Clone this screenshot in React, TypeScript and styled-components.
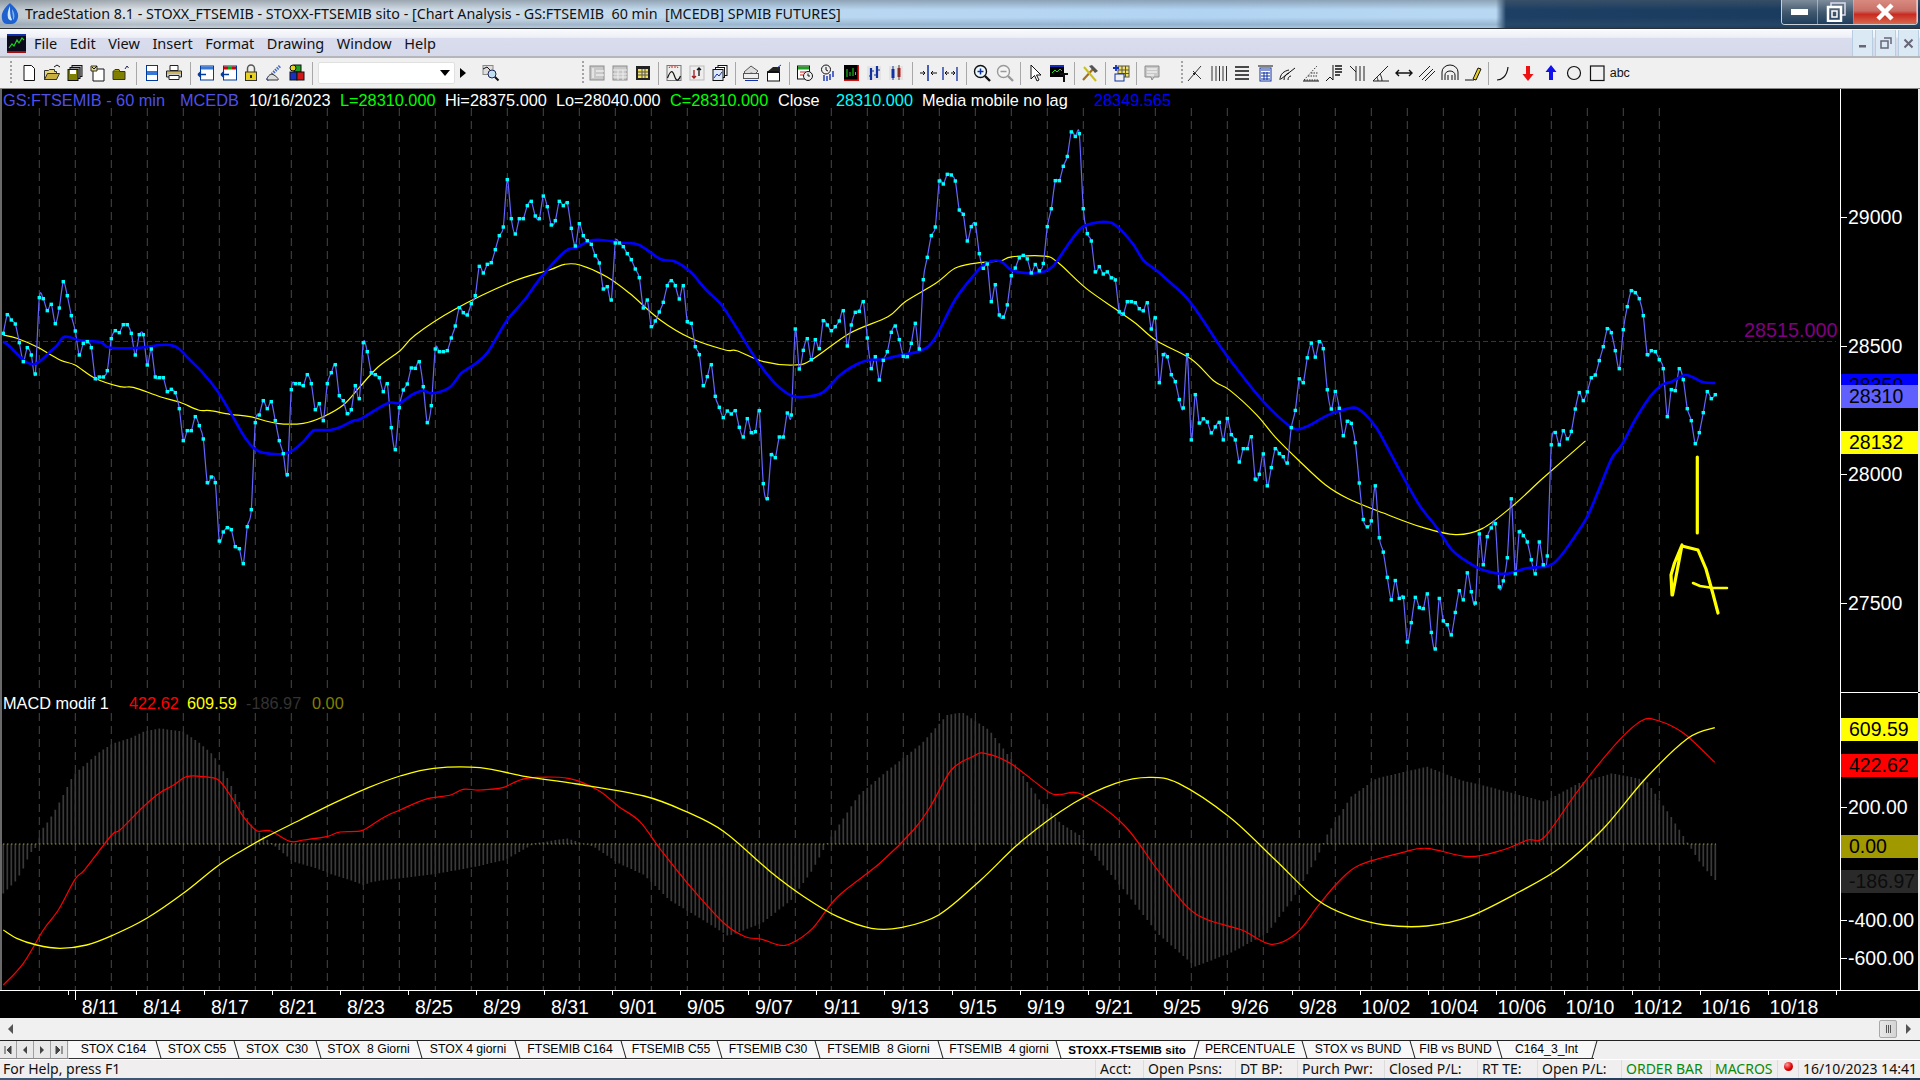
import React from "react";
import styled, { createGlobalStyle } from "styled-components";

const GlobalStyle = createGlobalStyle`
  html, body { margin: 0; padding: 0; background: #000; overflow: hidden; }
  #root { width: 1920px; height: 1080px; }
  * { box-sizing: border-box; }
`;

const UI = `"Noto Sans", "Open Sans", sans-serif`;
const CHART = `"Liberation Sans", Arial, sans-serif`;

type Pt = [number, number];
const zoomed = (list: number[][], ox: number, oy: number, sx: number, sy: number): Pt[] =>
  list.map(([x, y]) => [ox + x / sx, oy + y / sy]);
const lattice = (ys: number[], x0: number, oy: number, sy: number): Pt[] =>
  ys.map((y, i) => [x0 + i * 4, oy + y / sy]);

const smooth = (p: Pt[], k = 6) => {
  let d = `M${p[0][0].toFixed(1)} ${p[0][1].toFixed(1)}`;
  for (let i = 0; i < p.length - 1; i++) {
    const a = p[Math.max(i - 1, 0)];
    const b = p[i];
    const c = p[i + 1];
    const e = p[Math.min(i + 2, p.length - 1)];
    const c1x = b[0] + (c[0] - a[0]) / k;
    const c1y = b[1] + (c[1] - a[1]) / k;
    const c2x = c[0] - (e[0] - b[0]) / k;
    const c2y = c[1] - (e[1] - b[1]) / k;
    d += `C${c1x.toFixed(1)} ${c1y.toFixed(1)} ${c2x.toFixed(1)} ${c2y.toFixed(1)} ${c[0].toFixed(1)} ${c[1].toFixed(1)}`;
  }
  return d;
};

const closes: Pt[] = [
  ...lattice([160,104,120,132,188,245,203,225,282,53,56,92,73,131,84,5,47,107,153,225,190,185,203,296,291,291,272,176,152,158,134,134,160,225,164,164,255,207,291,293,293,335,328,338,386,482,452,452,410,437,477,608,591,608,783,756,743,749,800,806,851,740,689,428,405,362,386,365,422,482,521,584,329,311,311,317,284,311,389,371,422,311,278,254,347,362,401,389,317,356,188,215,278,284,293,335,311,443,509,383], 3.3, 280, 3),
  ...lattice([810,792,744,745,725,800,908,857,687,695,695,692,654,618,563,578,585,551,527,439,459,433,428,389,347,321,179,296,342,296,296,257,244,288,296,228,260,315,302,244,257,248,325,378,311,347,362,373,407,429,507,500,540,369,369,380,401,419,447,473,564,540,620,603,576,547,497,482,497,537,497,605,610,680,704,797,770,734,829,862,893,873,882,872,922,951,896,938,935,872,1091,1136,1004,1013,951,951,879,885,627,747,691,656,719,659,686,602,615,632,620,603,572,678,615,577,574,545,654,746,710,780,721,695,637,618,659,709,710,670,610,687,479,412,347,321,183,192,163,165,183,270,283,363,320,312,401,445,432,545,494,585], 403.3, 120, 3),
  ...lattice([562,527,444,422,393,386,396,436,412,430,409,304,253,173,173,132,104,34,47,39,253,324,345,433,418,439,433,450,456,547,553,518,518,521,538,544,521,596,564,749,669,675,726,746,797,821,669,912,783,864,852,861,892,875,862,912,851,897,912,975,937,937,903,1024,1010,952,1043,991,937,951,960,978,877,828,738,749,678,636,676,632,652,769,824,774,822,900,859,865,920,1035,1139,1160,1143,1043,1191,1232,1304,1368,1313,1364,1361,1488,1433,1361,1390,1393,1351,1461,1508,1364,1428,1439,1468,1404,1342,1368,1291,1345,1377,1180,1268,1188,1163,1151,1331,1314,1248,1080,1294,1174,1185,1203,1254,1294,1203,1268,1243,926,891,926,886,909,888,824,777,800,775,735,727,686], 1003.3, 120, 2.851),
  ...lattice([200,146,158,212,266,149,80,32,38,56,107,224,212,215,239,266,410,329,332,266,299,386,422,491,458,398,335,356,344], 1603.3, 280, 3),
];

const blueMA: Pt[] = [
  ...zoomed([[10,185],[30,200],[60,230],[80,247],[105,252],[130,235],[150,215],[170,198],[190,172],[210,172],[240,181],[300,186],[320,200],[340,204],[400,204],[440,201],[480,195],[510,195],[535,205],[570,240],[605,275],[650,330],[690,395],[730,465],[760,503],[790,518],[850,522],[880,510],[910,485],[935,455],[950,450],[990,450],[1020,442],[1060,422],[1080,418],[1110,400],[1165,369],[1200,369]], 0, 280, 3, 3),
  ...zoomed([[30,825],[60,812],[85,820],[130,802],[160,760],[195,733],[230,695],[280,600],[325,540],[370,470],[430,395],[460,383],[495,363],[525,360],[580,368],[625,375],[680,417],[720,425],[760,457],[800,510],[840,555],[880,625],[935,725],[980,790],[1025,828],[1060,830],[1105,817],[1150,765],[1195,732],[1225,720],[1260,718],[1310,705],[1360,692],[1395,660],[1450,540],[1500,465],[1530,430],[1568,423]], 400, 120, 2.613, 3),
  ...zoomed([[30,428],[75,437],[115,432],[140,415],[175,360],[210,310],[240,295],[280,291],[305,303],[345,350],[375,400],[410,430],[450,468],[490,510],[530,570],[575,645],[630,725],[690,805],[760,875],[795,877],[850,845],[885,830],[925,820],[950,835],[985,880],[1025,960],[1065,1040],[1100,1105],[1140,1160],[1180,1225],[1215,1255],[1260,1282],[1320,1294],[1375,1278],[1430,1272],[1460,1250],[1500,1190],[1535,1130],[1568,1045]], 1000, 120, 2.613, 2.851),
  ...zoomed([[35,535],[65,495],[105,420],[150,350],[185,315],[215,305],[255,285],[285,295],[310,307],[345,309]], 1600, 280, 3, 3),
];

const yellowMA: Pt[] = [
  ...zoomed([[10,165],[50,175],[110,200],[180,240],[225,255],[285,295],[360,320],[400,322],[480,350],[540,367],[595,390],[630,392],[690,403],[750,410],[830,430],[910,430],[970,410],[1030,375],[1080,320],[1135,260],[1200,212]], 0, 280, 3, 3),
  ...zoomed([[40,645],[140,570],[290,487],[390,450],[430,433],[470,435],[540,470],[600,520],[680,600],[760,655],[850,690],[880,692],[950,725],[1030,735],[1075,720],[1175,640],[1275,590],[1320,545],[1400,490],[1450,445],[1500,430],[1568,423]], 400, 120, 2.613, 3),
  ...zoomed([[30,390],[115,388],[150,405],[225,480],[310,545],[355,580],[410,630],[500,682],[560,745],[600,770],[670,840],[720,905],[780,970],[850,1040],[910,1080],[1000,1120],[1100,1160],[1190,1182],[1260,1165],[1340,1100],[1420,1020],[1530,915]], 1000, 120, 2.613, 2.851),
];

const macdYellow: Pt[] = [
  ...zoomed([[10,750],[50,775],[110,795],[180,805],[260,795],[340,765],[440,715],[550,640],[650,560],[720,515],[800,470],[900,420],[1000,370],[1100,325]], 0, 680, 3, 3),
  ...zoomed([[0,228],[40,205],[95,203],[150,230],[210,252],[290,288],[340,335],[385,395],[440,515],[480,590],[520,650],[560,685],[595,683],[640,645],[690,540],[740,420],[800,310],[850,250],[890,232],[925,250],[985,350],[1040,480],[1090,600],[1130,650],[1170,675],[1220,678],[1270,650],[1330,575],[1380,500],[1430,385],[1480,235],[1530,115],[1562,83]], 400, 700, 1.188, 3),
];

const macdRed: Pt[] = [
  ...zoomed([[10,915],[70,850],[130,750],[175,690],[225,598],[255,568],[335,465],[360,450],[430,380],[480,338],[520,316],[560,290],[610,290],[655,300],[690,345],[730,410],[770,452],[810,452],[870,484],[910,480],[980,470],[1020,456],[1085,452],[1130,425],[1165,405]], 0, 680, 3, 3),
  ...zoomed([[0,330],[30,298],[60,285],[75,268],[95,270],[122,263],[150,235],[200,235],[235,270],[260,320],[285,365],[310,450],[345,560],[385,670],[410,710],[430,718],[450,735],[465,730],[490,685],[520,590],[570,490],[610,390],[630,320],[655,210],[680,170],[695,160],[725,190],[770,275],[785,283],[810,283],[860,375],[900,510],[935,620],[960,660],[1000,690],[1035,733],[1065,700],[1090,620],[1115,545],[1140,495],[1190,458],[1220,445],[1270,470],[1310,450],[1340,420],[1360,410],[1400,270],[1445,130],[1475,62],[1495,62],[1525,100],[1562,187]], 400, 700, 1.188, 3),
];

const histEnvelope: Pt[] = [
  ...zoomed([[10,640],[30,620],[50,600],[70,565],[90,520],[110,500],[125,450],[140,430],[160,400],[190,345],[220,285],[260,250],[300,215],[340,190],[390,175],[430,155],[480,145],[550,155],[600,190],[640,225],[680,290],[720,370],[750,430],[790,470],[815,490],[850,520],[880,545],[950,565],[1000,585],[1050,600],[1090,615],[1120,605],[1170,598]], 0, 680, 3, 3),
  ...zoomed([[0,535],[40,523],[90,500],[125,480],[160,430],[198,415],[230,440],[260,490],[290,525],[320,600],[360,660],[390,708],[430,670],[465,600],[490,510],[505,440],[515,400],[545,285],[580,210],[620,130],[650,45],[668,37],[700,90],[730,190],[760,300],[785,370],[810,410],[825,465],[860,570],[900,700],[945,800],[990,755],[1030,700],[1060,600],[1090,470],[1100,410],[1130,290],[1160,235],[1220,200],[1260,240],[1300,265],[1360,305],[1400,250],[1440,220],[1480,240],[1510,350],[1530,430],[1545,490],[1562,540]], 400, 700, 1.188, 3),
];

const interpolate = (pts: Pt[], x: number) => {
  for (let i = 1; i < pts.length; i++) {
    if (x <= pts[i][0]) {
      const [x0, y0] = pts[i - 1];
      const [x1, y1] = pts[i];
      return y0 + ((y1 - y0) * (x - x0)) / Math.max(x1 - x0, 0.01);
    }
  }
  return pts[pts.length - 1][1];
};

const ZERO = 844;
const histPath = Array.from({ length: 429 }, (_, i) => {
  const x = 3.3 + i * 4;
  return `M${x.toFixed(1)} ${ZERO}V${interpolate(histEnvelope, x).toFixed(1)}`;
}).join("");

const gridPath = (y0: number, y1: number) =>
  Array.from({ length: 46 }, (_, k) => `M${(39.3 + k * 36).toFixed(1)} ${y0}V${y1}`).join("");

const Screen = styled.div`
  width: 1920px;
  height: 1080px;
  display: flex;
  flex-direction: column;
  overflow: hidden;
  background: #f0f0f0;
`;

const TitleBar = styled.div`
  height: 29px;
  flex: none;
  display: flex;
  align-items: flex-start;
  border-bottom: 1px solid #2c3138;
  background:
    linear-gradient(180deg, rgba(255,255,255,0) 62%, rgba(70,95,120,0.28) 88%, rgba(60,80,100,0.12) 100%),
    linear-gradient(180deg, rgba(90,100,110,0.45) 0, rgba(255,255,255,0) 35%),
    linear-gradient(90deg, #bcc6ce 0, #dbe1e6 130px, #cfdbe6 430px, #bcd8f0 720px, #b2d4f3 1200px, #b8d8f2 1496px, #1d3f63 1506px, #183a5c 1920px);
`;

const AppIcon = styled.svg`
  width: 20px;
  height: 26px;
  margin: 1px 5px 0 0;
  flex: none;
`;

const TitleText = styled.div`
  font: 14.3px/28px ${UI};
  color: #111;
  white-space: pre;
`;

const WinButtons = styled.div`
  margin-left: auto;
  margin-right: 2px;
  display: flex;
  height: 25px;
  border: 1px solid #c8d0d8;
  border-top: none;
  border-radius: 0 0 4px 4px;
  overflow: hidden;
`;

const WinBtn = styled.div<{ $w: number; $close?: boolean }>`
  width: ${(p) => p.$w}px;
  display: flex;
  align-items: center;
  justify-content: center;
  border-right: 1px solid rgba(255, 255, 255, 0.4);
  background: ${(p) =>
    p.$close
      ? "linear-gradient(180deg,#d98a80 0,#c87068 45%,#c92a20 60%,#d86a50 100%)"
      : "linear-gradient(180deg,#7d8c9b 0,#42596f 50%,#1f3e5e 100%)"};
`;

const MenuBar = styled.div`
  height: 29px;
  flex: none;
  display: flex;
  align-items: center;
  padding-left: 7px;
  border-top: 1px solid #fff;
  border-bottom: 2px solid #b4b6bc;
  background: linear-gradient(180deg, #f8f9fc 0, #eef0f7 28%, #d9ddee 32%, #d5d9ea 100%);
`;

const MenuLogo = styled.svg`
  width: 19px;
  height: 19px;
  margin-right: 8px;
  flex: none;
`;

const MenuItems = styled.div`
  display: flex;
  gap: 12.5px;
  font: 14.5px/20px ${UI};
  color: #111;
`;

const MdiButtons = styled.div`
  margin-left: auto;
  margin-right: 1px;
  display: flex;
  gap: 2px;
  align-self: stretch;
`;

const MdiBtn = styled.div`
  width: 21px;
  display: flex;
  align-items: center;
  justify-content: center;
  background: #dbe9f5;
  border: 1px solid #b8cde0;
  border-width: 0 1px;
`;

const ToolBar = styled.div`
  height: 31px;
  flex: none;
  display: flex;
  align-items: center;
  background: #f0f0f0;
  border-bottom: 1px solid #888;
`;

const Slot = styled.div<{ $w?: number }>`
  width: ${(p) => p.$w ?? 22.85}px;
  height: 22px;
  flex: none;
  display: flex;
  align-items: center;
  justify-content: center;
`;

const Ico = styled.svg.attrs({ viewBox: "0 0 20 20" })`
  width: 20px;
  height: 20px;
  display: block;
`;

const Sep = styled.div`
  width: 1px;
  height: 23px;
  margin: 0 3.7px;
  background: #a8a8a8;
  flex: none;
`;

const Grip = styled.div<{ $ml: number }>`
  width: 2px;
  height: 24px;
  margin-left: ${(p) => p.$ml}px;
  margin-right: 1.6px;
  flex: none;
  background: repeating-linear-gradient(180deg, #a4a4a4 0 2px, transparent 2px 4px);
`;

const Combo = styled.div`
  width: 137px;
  height: 22px;
  margin-left: 1.5px;
  background: #fff;
  border: 1px solid #e0e0e0;
  border-radius: 2px;
  display: flex;
  align-items: center;
  justify-content: flex-end;
  padding-right: 4px;
  flex: none;
`;

const Caret = styled.div`
  width: 0;
  height: 0;
  border-left: 5px solid transparent;
  border-right: 5px solid transparent;
  border-top: 6px solid #000;
`;

const CaretRight = styled.div`
  width: 0;
  height: 0;
  border-top: 5px solid transparent;
  border-bottom: 5px solid transparent;
  border-left: 6px solid #000;
`;

const AbcText = styled.span`
  font: 12.5px/20px ${CHART};
  color: #111;
`;

const ChartArea = styled.div`
  height: 929px;
  flex: none;
  background: #000;
  display: flex;
  flex-direction: column;
  font-family: ${CHART};
`;

const Pane = styled.div<{ $h: number }>`
  height: ${(p) => p.$h}px;
  flex: none;
  display: flex;
`;

const Plot = styled.div`
  position: relative;
  width: 1840px;
  flex: none;
  box-shadow: inset 2px 0 0 #6a6a6a;
`;

const PlotSvg = styled.svg`
  display: block;
  width: 100%;
  height: 100%;
`;

const Legend = styled.div<{ $top: number }>`
  position: absolute;
  left: 3px;
  top: ${(p) => p.$top}px;
  display: flex;
  font-size: 16.3px;
  line-height: 20px;
  white-space: pre;
`;

const LegendItem = styled.span<{ $w?: number; $c: string }>`
  width: ${(p) => (p.$w ? `${p.$w}px` : "auto")};
  color: ${(p) => p.$c};
  flex: none;
`;

const PriceFloat = styled.span`
  position: absolute;
  left: 1744px;
  top: 230px;
  color: #800080;
  font-size: 19.8px;
  line-height: 22px;
`;

const Axis = styled.div<{ $line?: boolean }>`
  position: relative;
  flex: 1;
  border-left: 1px solid #fff;
  margin-right: 2px;
  border-bottom: ${(p) => (p.$line ? "1px solid #fff" : "none")};
`;

const RightGutter = styled.div`
  position: absolute;
  right: -2px;
  top: 0;
  bottom: 0;
  width: 2px;
  background: #e8e8e8;
`;

const AxisValue = styled.div<{ $y: number }>`
  position: absolute;
  left: 7px;
  top: ${(p) => p.$y}px;
  transform: translateY(-50%);
  color: #fff;
  font-size: 19.5px;
  line-height: 22px;
  &::before {
    content: "";
    position: absolute;
    left: -7px;
    top: 11px;
    width: 6px;
    height: 1px;
    background: #fff;
  }
`;

const AxisTag = styled.div<{ $y: number; $bg: string; $c?: string; $h?: number }>`
  position: absolute;
  left: 0;
  right: 0;
  top: ${(p) => p.$y}px;
  height: ${(p) => p.$h ?? 23}px;
  background: ${(p) => p.$bg};
  color: ${(p) => p.$c ?? "#000"};
  font-size: 19.5px;
  line-height: 23px;
  padding-left: 8px;
  overflow: hidden;
`;

const DateAxis = styled.div`
  height: 28px;
  flex: none;
  display: flex;
  padding-left: 72px;
  border-top: 1px solid #fff;
`;

const DateCell = styled.div<{ $w?: number; $first?: boolean }>`
  position: relative;
  width: ${(p) => p.$w ?? 68}px;
  flex: none;
  text-align: center;
  color: #fff;
  font-size: 19.5px;
  line-height: 32px;
  &::before {
    content: "";
    position: absolute;
    top: 0;
    left: ${(p) => (p.$first ? -4 : 8)}px;
    width: 1px;
    height: 4px;
    background: #fff;
  }
  &::after {
    content: "";
    display: ${(p) => (p.$first ? "block" : "none")};
    position: absolute;
    top: 0;
    left: 3px;
    width: 1px;
    height: 9px;
    background: #fff;
  }
`;

const ScrollBar = styled.div`
  height: 22px;
  flex: none;
  display: flex;
  align-items: center;
  background: #f0f0f0;
  padding: 0 9px 0 8px;
`;

const ScrollLeft = styled.div`
  width: 0;
  height: 0;
  border-top: 5px solid transparent;
  border-bottom: 5px solid transparent;
  border-right: 5px solid #555;
`;

const ScrollThumb = styled.div`
  margin-left: auto;
  width: 18px;
  height: 18px;
  background: linear-gradient(90deg, #e8e8e8, #d4d4d4);
  border: 1px solid #a8a8a8;
  border-radius: 2px;
  display: flex;
  align-items: center;
  justify-content: center;
  gap: 1px;
`;

const ThumbBar = styled.span`
  width: 1px;
  height: 8px;
  background: #555;
`;

const ScrollRight = styled.div`
  margin-left: 9px;
  width: 0;
  height: 0;
  border-top: 5px solid transparent;
  border-bottom: 5px solid transparent;
  border-left: 5px solid #555;
`;

const TabRow = styled.div`
  height: 19px;
  flex: none;
  display: flex;
  border-top: 1px solid #222;
  background: #f0f0f0;
`;

const NavGroup = styled.div`
  width: 69px;
  flex: none;
  display: flex;
  border-bottom: 1px solid #888;
`;

const NavBtn = styled.div`
  width: 17px;
  display: flex;
  align-items: center;
  justify-content: center;
  background: #e8e8e8;
  border-right: 1px solid #a0a0a0;
  color: #444;
`;

const Tab = styled.div<{ $w: number; $active?: boolean; $flip?: boolean }>`
  position: relative;
  width: ${(p) => p.$w}px;
  flex: none;
  text-align: center;
  font-size: ${(p) => (p.$active ? 11.6 : 12.2)}px;
  line-height: 17px;
  font-family: ${CHART};
  font-weight: ${(p) => (p.$active ? 700 : 400)};
  color: #000;
  white-space: pre;
  background: ${(p) => (p.$active ? "#fff" : "#f8f8f8")};
  border-bottom: 1px solid #333;
  &::after {
    content: "";
    position: absolute;
    z-index: 1;
    right: -1px;
    top: -1px;
    width: 1px;
    height: 19px;
    background: #222;
    transform: rotate(${(p) => (p.$flip ? 16 : -16)}deg);
  }
`;

const StatusBar = styled.div`
  height: 19px;
  flex: none;
  display: flex;
  align-items: center;
  background: #f0eeee;
  border-top: 1px solid #fff;
  font: 14px/18px ${UI};
  color: #111;
`;

const StatusHelp = styled.div`
  flex: 1;
  padding-left: 3px;
`;

const StatusField = styled.div<{ $w: number; $c?: string }>`
  width: ${(p) => p.$w}px;
  flex: none;
  height: 100%;
  padding-left: 4px;
  border-left: 1px solid #dcdcdc;
  color: ${(p) => p.$c ?? "#111"};
  white-space: pre;
  display: flex;
  align-items: center;
`;

const RedDot = styled.span`
  width: 9px;
  height: 9px;
  margin: -6px 0 0 2px;
  border-radius: 50%;
  background: radial-gradient(circle at 35% 30%, #ff9a9a, #e00000 55%, #800 100%);
`;

const BottomStrip = styled.div`
  flex: 1;
  background: linear-gradient(90deg, #3c5a78, #1e3a5a);
`;

const S = { fill: "none", stroke: "#111", strokeWidth: 1 } as const;
const G = { fill: "#c8c8c8", stroke: "#8c8c8c", strokeWidth: 1 } as const;

const icons: Record<string, React.ReactNode> = {
  doc: <path d="M5 2.500h7.500l3 3v12H5z" fill="#fff" stroke="#111" />,
  open: <><path d="M2.500 16.500v-9h4l1-1h5v2h2v8z" fill="#e8d878" stroke="#333" /><path d="M2.500 16.500l3-6h12l-3 6z" fill="#c8b040" stroke="#333" /><path d="M12 4l3-2 3 2" fill="none" stroke="#111" /></>,
  saves: <><rect x="7" y="2.500" width="10" height="11" fill="#bbb" stroke="#111" /><rect x="5" y="4.500" width="10" height="11" fill="#999" stroke="#111" /><rect x="3" y="6.500" width="10" height="11" fill="#808000" stroke="#111" /><rect x="5" y="7" width="6" height="4" fill="#fff" /></>,
  sheet: <><path d="M5 6h11v12H5z" fill="#fff" stroke="#111" /><path d="M3 3h6v5H3z" fill="#e8d878" stroke="#333" /><path d="M4 4l2 2 3-3" {...S} /></>,
  box: <><path d="M3 8.500h12v8H3z" fill="#808000" stroke="#333" /><path d="M3 8.500l2-2h4l1 2" fill="#a0a000" stroke="#333" /><path d="M15 6l2-3 1.500 2" fill="none" stroke="#225" /></>,
  page: <><rect x="4.500" y="2.500" width="11" height="15" fill="#fff" stroke="#003a9a" /><rect x="5" y="8" width="10" height="4" fill="#3a78d8" /></>,
  printer: <><path d="M6 2.500h8v5H6z" fill="#fff" stroke="#222" /><path d="M2.500 8h15v6h-15z" fill="#ccc" stroke="#222" /><path d="M5 12.500h10v4H5z" fill="#fff" stroke="#222" /><path d="M3 10h14" stroke="#c8a000" /></>,
  win1: <><rect x="4.500" y="3" width="13" height="14" fill="#fff" stroke="#003a9a" /><rect x="5" y="3.500" width="12" height="3" fill="#3a78d8" /><path d="M2 11.500h8M2 11.500l3-3M2 11.500l3 3" fill="none" stroke="#003a9a" strokeWidth="1.400" /></>,
  win2: <><rect x="4.500" y="3" width="13" height="14" fill="#fff" stroke="#003a9a" /><rect x="5" y="3.500" width="4" height="3" fill="#d00" /><rect x="9" y="3.500" width="4" height="3" fill="#0a0" /><rect x="13" y="3.500" width="4" height="3" fill="#d00" /><path d="M2 11.500h8M2 11.500l3-3M2 11.500l3 3" fill="none" stroke="#003a9a" strokeWidth="1.400" /></>,
  lock: <><path d="M6.500 9V5.500a3.500 3.500 0 0 1 7 0V9" fill="none" stroke="#555" strokeWidth="1.500" /><rect x="4.500" y="9" width="11" height="8.500" fill="#e8d020" stroke="#333" /><rect x="9" y="12" width="2" height="3" fill="#222" /></>,
  dish: <><path d="M3 17l6-7 7-7" fill="none" stroke="#456ac0" strokeWidth="3" strokeDasharray="1.500 1" /><path d="M3 17c0-4 4-7 7-5s5 4 4 5z" fill="#ddd" stroke="#333" /></>,
  cubes: <><rect x="7" y="2" width="7" height="7" fill="#20a020" stroke="#111" /><circle cx="6" cy="5" r="3" fill="#e8d020" stroke="#111" /><rect x="3" y="9" width="7" height="8" fill="#1830c0" stroke="#111" /><rect x="10" y="9" width="7" height="8" fill="#d01818" stroke="#111" /></>,
  scan: <><rect x="3" y="2.500" width="10" height="9" fill="#ddd" stroke="#888" /><path d="M3 6l4-2 3 3" {...S} /><circle cx="12" cy="11" r="4" fill="#bfe0f0" stroke="#225" /><path d="M15 14l3.500 3.500" stroke="#111" strokeWidth="2" /></>,
  gDollar: <><rect x="3" y="3" width="14" height="14" {...G} /><path d="M9 8h8M9 12h8" stroke="#fff" /><path d="M6 5v10" stroke="#fff" /></>,
  gTable: <><rect x="3" y="3" width="14" height="14" {...G} /><path d="M3 7h14M3 11h14M3 14h14M8 7v10M13 7v10" stroke="#eee" /></>,
  yTable: <><rect x="3" y="3" width="14" height="14" fill="#222" /><rect x="5" y="6" width="10" height="9" fill="#f0e060" /><path d="M5 9h10M5 12h10M9 6v9M12 6v9" stroke="#555" /></>,
  ind: <><rect x="3" y="2.500" width="14" height="15" fill="#eee" stroke="#777" /><path d="M5 5l1-1.500M8 5V3M11 5V3M14 5l-1-1.500" stroke="#d01818" /><path d="M3.500 15c3-8 5-8 7-2s4 5 6 0" fill="none" stroke="#111" strokeWidth="1.200" /></>,
  arrows: <><rect x="3" y="3" width="14" height="14" fill="#eee" stroke="#bbb" /><path d="M7 7v8M5 13l2 2 2-2" fill="none" stroke="#a01818" strokeWidth="1.300" /><path d="M12 13V5M10 7l2-2 2 2" fill="none" stroke="#111" strokeWidth="1.300" /></>,
  stack: <><rect x="8" y="2.500" width="9" height="10" fill="#fff" stroke="#111" /><rect x="5.500" y="4.500" width="9" height="10" fill="#fff" stroke="#111" /><rect x="3" y="6.500" width="10" height="11" fill="#dfe8f8" stroke="#111" /><path d="M4 15l3-4 2 2 3-4" fill="none" stroke="#1030b0" /></>,
  gChart: <><path d="M3 9l7-6 7 5-3 3-4-1-4 2z" fill="#ddd" stroke="#555" /><rect x="2.500" y="10.500" width="15" height="5" fill="#eee" stroke="#555" /><path d="M4 17.500h13" stroke="#1030b0" /></>,
  blackWin: <><path d="M3 9l6-5h7v4l-2 2z" fill="#222" /><rect x="3.500" y="9" width="12" height="9" fill="#fff" stroke="#111" /><path d="M3.500 9h12" stroke="#111" strokeWidth="2" /><path d="M13 5l4-3" stroke="#1030b0" /></>,
  cal: <><rect x="2.500" y="3" width="12" height="13" fill="#fff" stroke="#111" /><rect x="3" y="3.500" width="11" height="3" fill="#20a020" /><path d="M5 9h6M5 12h3" stroke="#d01818" /><circle cx="13" cy="13" r="4.500" fill="#eee" stroke="#111" /><path d="M13 10.500V13h2" {...S} /></>,
  clock: <><circle cx="8" cy="6.500" r="4.500" fill="#eee" stroke="#111" /><path d="M8 4v3l2 1" {...S} /><path d="M6 12v6M9 13v5M12 11v6M15 8v6" stroke="#1030b0" strokeWidth="1.400" /></>,
  blackBars: <><rect x="3" y="2" width="15" height="16" fill="#000" /><rect x="16.500" y="2" width="1.500" height="16" fill="#d01818" /><rect x="3" y="16.500" width="15" height="1.500" fill="#d01818" /><path d="M6 6v8M9 9v4M12 5v8M14.500 9v3" stroke="#20e020" /></>,
  blueBars: <><rect x="3" y="3" width="14" height="14" fill="#e4e4e4" /><path d="M7 5v12M13 3v12" stroke="#1030a0" strokeWidth="2.200" /><path d="M5 13h2M13 7h3M7 8h3M10 12h3" stroke="#1030a0" /></>,
  candles: <><rect x="3" y="3" width="14" height="14" fill="#e4e4e4" /><rect x="5.500" y="6" width="3" height="9" fill="#1030a0" /><path d="M7 3v14" stroke="#1030a0" /><rect x="11.500" y="5" width="3" height="9" fill="#c01818" /><path d="M13 2v15" stroke="#444" /></>,
  inBars: <><path d="M10 2v16" stroke="#1030a0" strokeWidth="1.500" /><path d="M2 10h5M14 10h5M5 8l2 2-2 2M15 8l-2 2 2 2" fill="none" stroke="#111" /></>,
  outBars: <><path d="M2 4v13M16 4v14" stroke="#1030a0" strokeWidth="1.300" /><path d="M4 10h4M10 10h4M6 8l-2 2 2 2M12 8l2 2-2 2" fill="none" stroke="#111" /></>,
  zoomIn: <><circle cx="8.500" cy="8.500" r="6" fill="#eefaff" stroke="#111" strokeWidth="1.400" /><path d="M8.500 5.500v6M5.500 8.500h6" stroke="#1030a0" strokeWidth="1.500" /><path d="M13 13l5 5" stroke="#111" strokeWidth="2.400" /></>,
  zoomOut: <><circle cx="8.500" cy="8.500" r="6" fill="#f4f4f4" stroke="#999" strokeWidth="1.400" /><path d="M5.500 8.500h6" stroke="#999" strokeWidth="1.500" /><path d="M13 13l5 5" stroke="#999" strokeWidth="2.400" /></>,
  cursor: <path d="M5 2v14l3.500-3.500 2.500 5.500 2-1-2.500-5H15z" fill="#fff" stroke="#111" />,
  blackT: <><rect x="1" y="2" width="14" height="12" fill="#000" /><rect x="1" y="2" width="14" height="2" fill="#1030c0" /><path d="M3 10l3-3 2 2 3-3 2 2" fill="none" stroke="#20e020" /><path d="M11 11h8M15 11v8" stroke="#111" strokeWidth="2" /></>,
  tools: <><path d="M3 17L14 5" stroke="#a07020" strokeWidth="2.200" /><path d="M9 3l3-1 6 6-3 2z" fill="#555" /><path d="M4 4l12 14" stroke="#c8c020" strokeWidth="2" /></>,
  gridPlus: <><rect x="7" y="3" width="11" height="11" fill="#f0e060" stroke="#555" /><path d="M7 7h11M7 10.500h11M11 3v11M14.500 3v11" stroke="#555" /><rect x="4" y="11" width="9" height="7" fill="#eee" stroke="#1030a0" /><path d="M5 2v6M2 5h6" stroke="#1030c0" strokeWidth="1.800" /></>,
  gNote: <><path d="M3 3h14v11h-5l-2 3-1-3H3z" {...G} /><path d="M5 6h10M5 9h10M5 12h7" stroke="#fff" /></>,
  diag: <><path d="M2 18L15 3M7 8l8 8" fill="none" stroke="#333" /><path d="M7 10l2 2" stroke="#111" /></>,
  vlines: <path d="M3 3v15M7 3v15M10.500 3v15M14 3v15M17.500 3v15" stroke="#333" />,
  hlines: <path d="M3 4h14M3 8h14M3 12h14M3 16h14" stroke="#111" strokeWidth="1.400" />,
  calc: <><path d="M3 3h15" stroke="#111" /><rect x="5" y="5" width="11" height="13" fill="#fff" stroke="#1030a0" /><path d="M6 7h9M6 10h9M6 13h9M6 16h9M9 9v8M12 9v8" stroke="#1030a0" /></>,
  arcs: <><path d="M2 17c0-6 4-9 9-10" {...S} /><path d="M6 17c0-4 2-6 5-7M10 17c0-2 1-4 3-4" {...S} /><path d="M3 16L17 5" {...S} /></>,
  fibDash: <><path d="M3 17L16 3" fill="none" stroke="#333" strokeDasharray="1.500 1.500" /><path d="M3 17h15M7 13h10M10 10h7" fill="none" stroke="#333" strokeDasharray="1.500 1" /><path d="M2 18h16" stroke="#111" /></>,
  retr: <><path d="M2 18l4-4 3 3V2" fill="none" stroke="#111" /><path d="M11 3h7M11 6h7M11 9h7M11 12h5" stroke="#111" strokeWidth="1.300" /></>,
  vfork: <path d="M2 3l6 6M8 3v15M12 3v15M16 3v15" fill="none" stroke="#222" />,
  angle: <><path d="M2 18L17 3M2 18h16M7 18c0-2-1-3-1-4M11 18c0-3-1-5-2-7" fill="none" stroke="#222" /></>,
  lr: <path d="M2 10h16M5 7l-3 3 3 3M15 7l3 3-3 3" fill="none" stroke="#111" strokeWidth="1.400" />,
  par: <path d="M2 14L13 3M5 17L16 6M8 18L18 8" fill="none" stroke="#222" />,
  dome: <><path d="M2 17V9a8 7 0 0 1 16 0v8" {...S} /><path d="M5 17v-5M8 17v-5M12 17v-5M15 17v-5" {...S} /><path d="M5 12a5 4 0 0 1 10 0" {...S} /></>,
  pencil: <><path d="M2 17h9" stroke="#111" /><path d="M10 16l5-11 3 1-5 11z" fill="#e8d020" stroke="#111" /></>,
  curve: <path d="M3 17c4 0 10-3 11-13" fill="none" stroke="#111" strokeWidth="1.200" />,
  down: <path d="M8 3h4v8h3.500L10 18 4.500 11H8z" fill="#ee1111" />,
  up: <path d="M8 17h4V9h3.500L10 2 4.500 9H8z" fill="#1111ee" />,
  circle: <circle cx="10" cy="10" r="6.500" {...S} strokeWidth={1.200} />,
  square: <rect x="3.500" y="3" width="13.500" height="14.500" {...S} strokeWidth={1.200} />,
};

const IconRun = ({ names, w }: { names: string[]; w?: number }) => (
  <>
    {names.map((n) => (
      <Slot key={n} $w={w}>
        <Ico>{icons[n]}</Ico>
      </Slot>
    ))}
  </>
);

const Toolbar = () => (
  <ToolBar>
    <Grip $ml={10} />
    <Slot $w={4} />
    <IconRun names={["doc", "open", "saves", "sheet", "box"]} />
    <Sep />
    <IconRun names={["page", "printer"]} />
    <Sep />
    <IconRun names={["win1", "win2", "lock", "dish", "cubes"]} />
    <Sep />
    <Combo>
      <Caret />
    </Combo>
    <Slot $w={16}>
      <CaretRight />
    </Slot>
    <Slot $w={7} />
    <IconRun names={["scan"]} />
    <Grip $ml={81} />
    <IconRun names={["gDollar", "gTable", "yTable"]} />
    <Sep />
    <IconRun names={["ind", "arrows", "stack"]} />
    <Sep />
    <IconRun names={["gChart", "blackWin"]} />
    <Sep />
    <IconRun names={["cal", "clock", "blackBars", "blueBars", "candles"]} />
    <Sep />
    <IconRun names={["inBars", "outBars"]} />
    <Sep />
    <IconRun names={["zoomIn", "zoomOut"]} />
    <Sep />
    <IconRun names={["cursor", "blackT"]} />
    <Sep />
    <IconRun names={["tools"]} />
    <Sep />
    <IconRun names={["gridPlus"]} />
    <Sep />
    <IconRun names={["gNote"]} />
    <Grip $ml={17} />
    <IconRun w={23.1} names={["diag", "vlines", "hlines", "calc", "arcs", "fibDash", "retr", "vfork", "angle", "lr", "par", "dome", "pencil"]} />
    <Sep />
    <IconRun w={23.1} names={["curve", "down", "up", "circle", "square"]} />
    <Slot>
      <AbcText>abc</AbcText>
    </Slot>
  </ToolBar>
);

const tabs: [string, number, boolean?, boolean?][] = [
  ["STOX C164", 89],
  ["STOX C55", 78],
  ["STOX  C30", 82],
  ["STOX  8 Giorni", 101],
  ["STOX 4 giorni", 98],
  ["FTSEMIB C164", 106],
  ["FTSEMIB C55", 96],
  ["FTSEMIB C30", 98],
  ["FTSEMIB  8 Giorni", 123],
  ["FTSEMIB  4 giorni", 118],
  ["STOXX-FTSEMIB sito", 138, true, true],
  ["PERCENTUALE", 108],
  ["STOX vs BUND", 108],
  ["FIB vs BUND", 87],
  ["C164_3_Int", 95, false, true],
];

const dates = ["8/14","8/17","8/21","8/23","8/25","8/29","8/31","9/01","9/05","9/07","9/11","9/13","9/15","9/19","9/21","9/25","9/26","9/28","10/02","10/04","10/06","10/10","10/12","10/16","10/18",""];

const navGlyphs = ["first", "prev", "next", "last"];

export default function App() {
  return (
    <Screen>
      <GlobalStyle />
      <TitleBar>
        <AppIcon viewBox="0 0 20 26">
          <path d="M10 2c3 3 7 6 8 11 1 6-3 10-6 10H7c-4 0-6-5-5-10 1-4 4-8 8-11z" fill="#1e62d0" />
          <path d="M10 5c-2 4-3 8-2 12 1 2 3 3 4 2-2-4-2-9-2-14z" fill="#cfe6fb" />
          <path d="M12 8c2 3 3 6 2 10-1 1-1 1-1 0 0-3-1-7-1-10z" fill="#7db8f0" />
        </AppIcon>
        <TitleText>{"TradeStation 8.1 - STOXX_FTSEMIB - STOXX-FTSEMIB sito - [Chart Analysis - GS:FTSEMIB  60 min  [MCEDB] SPMIB FUTURES]"}</TitleText>
        <WinButtons>
          <WinBtn $w={36}>
            <svg width="18" height="8" viewBox="0 0 18 8"><rect x="0" y="1" width="17" height="6" fill="#fff" /></svg>
          </WinBtn>
          <WinBtn $w={36}>
            <svg width="20" height="20" viewBox="0 0 20 20"><path d="M5 1h14v12H15V5H5z" fill="none" stroke="#dde" strokeWidth="1.500" /><rect x="2" y="5" width="13" height="14" fill="none" stroke="#fff" strokeWidth="2.500" /><rect x="6" y="9" width="5" height="6" fill="none" stroke="#fff" strokeWidth="1.500" /></svg>
          </WinBtn>
          <WinBtn $w={63} $close>
            <svg width="20" height="18" viewBox="0 0 20 18"><path d="M3 2l14 14M17 2L3 16" stroke="#fff" strokeWidth="4.500" /></svg>
          </WinBtn>
        </WinButtons>
      </TitleBar>
      <MenuBar>
        <MenuLogo viewBox="0 0 19 19">
          <rect width="19" height="19" fill="#0a0a1a" />
          <rect width="19" height="2" fill="#1030b0" />
          <rect y="17" width="19" height="2" fill="#a01010" />
          <path d="M2 14l3-4 2 2 3-6 2 3 3-5 2 2" fill="none" stroke="#20d020" strokeWidth="1.200" />
        </MenuLogo>
        <MenuItems>
          {["File", "Edit", "View", "Insert", "Format", "Drawing", "Window", "Help"].map((m) => (
            <span key={m}>{m}</span>
          ))}
        </MenuItems>
        <MdiButtons>
          <MdiBtn>
            <svg width="10" height="10" viewBox="0 0 10 10"><rect x="1" y="7" width="7" height="2.500" fill="#667" /></svg>
          </MdiBtn>
          <MdiBtn>
            <svg width="12" height="12" viewBox="0 0 12 12"><path d="M4 1h7v6M1 4h7v7H1z" fill="none" stroke="#667" strokeWidth="1.500" /></svg>
          </MdiBtn>
          <MdiBtn>
            <svg width="11" height="11" viewBox="0 0 11 11"><path d="M1.500 1.500l8 8M9.500 1.500l-8 8" stroke="#667" strokeWidth="2" /></svg>
          </MdiBtn>
        </MdiButtons>
      </MenuBar>
      <Toolbar />
      <ChartArea>
        <Pane $h={604}>
          <Plot>
            <PlotSvg viewBox="0 89 1840 604">
              <path d={gridPath(108, 693)} stroke="#464646" strokeWidth="1" strokeDasharray="8 5" fill="none" />
              <path d="M3 341.500H1836" stroke="#800080" strokeWidth="1" strokeDasharray="5 3" fill="none" />
              <path d={smooth(yellowMA)} fill="none" stroke="#ffff00" strokeWidth="1.200" />
              <path d={smooth(closes, 7)} fill="none" stroke="#6464ff" strokeWidth="1.200" />
              <path d={smooth(blueMA)} fill="none" stroke="#0000ff" strokeWidth="2.600" />
              {closes.map(([x, y], i) => (
                <rect key={i} x={x - 1.7} y={y - 1.7} width="3.400" height="3.400" fill="#00ffff" />
              ))}
              <g fill="none" stroke="#ffff00" strokeLinecap="round" strokeLinejoin="round">
                <path d="M1697.300 457V533" strokeWidth="3.200" />
                <path d="M1672 595l-1-20 3.500-12 7.500-18-9.500 50M1682 546l16 4 8 19 7 25 5 19" strokeWidth="3.200" />
                <path d="M1693 583l7 3 13 2h14" strokeWidth="2.600" />
              </g>
            </PlotSvg>
            <Legend $top={1}>
              <LegendItem $w={177} $c="#5050e8">GS:FTSEMIB - 60 min</LegendItem>
              <LegendItem $w={69} $c="#5050e8">MCEDB</LegendItem>
              <LegendItem $w={91} $c="#fff">10/16/2023</LegendItem>
              <LegendItem $w={105} $c="#00ff00">L=28310.000</LegendItem>
              <LegendItem $w={111} $c="#fff">Hi=28375.000</LegendItem>
              <LegendItem $w={114} $c="#fff">Lo=28040.000</LegendItem>
              <LegendItem $w={108} $c="#00ff00">C=28310.000</LegendItem>
              <LegendItem $w={58} $c="#fff">Close</LegendItem>
              <LegendItem $w={86} $c="#00ffff">28310.000</LegendItem>
              <LegendItem $w={172} $c="#fff">Media mobile no lag</LegendItem>
              <LegendItem $c="#0000ff">28349.565</LegendItem>
            </Legend>
            <PriceFloat>28515.000</PriceFloat>
          </Plot>
          <Axis $line>
            <RightGutter />
            <AxisValue $y={127.5}>29000</AxisValue>
            <AxisValue $y={256.5}>28500</AxisValue>
            <AxisTag $y={285} $bg="#0000ff" $h={12}>28350</AxisTag>
            <AxisTag $y={296} $bg="#6060ff">28310</AxisTag>
            <AxisTag $y={342} $bg="#ffff00">28132</AxisTag>
            <AxisValue $y={385}>28000</AxisValue>
            <AxisValue $y={514}>27500</AxisValue>
          </Axis>
        </Pane>
        <Pane $h={297}>
          <Plot>
            <PlotSvg viewBox="0 693 1840 297">
              <path d={gridPath(713, 990)} stroke="#464646" strokeWidth="1" strokeDasharray="8 5" fill="none" />
              <path d={histPath} stroke="#3a3a3a" strokeWidth="1.700" fill="none" />
              <path d="M3 844H1716" stroke="#a0a000" strokeWidth="1" strokeDasharray="1.500 2.500" fill="none" />
              <path d={smooth(macdRed)} fill="none" stroke="#ff0000" strokeWidth="1.200" />
              <path d={smooth(macdYellow)} fill="none" stroke="#ffff00" strokeWidth="1.300" />
            </PlotSvg>
            <Legend $top={0}>
              <LegendItem $w={126} $c="#fff">MACD modif 1</LegendItem>
              <LegendItem $w={58} $c="#ff0000">422.62</LegendItem>
              <LegendItem $w={59} $c="#ffff00">609.59</LegendItem>
              <LegendItem $w={66} $c="#333">-186.97</LegendItem>
              <LegendItem $c="#808000">0.00</LegendItem>
            </Legend>
          </Plot>
          <Axis>
            <RightGutter />
            <AxisTag $y={25} $bg="#ffff00">609.59</AxisTag>
            <AxisTag $y={61} $bg="#ff0000">422.62</AxisTag>
            <AxisValue $y={114}>200.00</AxisValue>
            <AxisTag $y={142} $bg="#a09a00">0.00</AxisTag>
            <AxisTag $y={177} $bg="#2a2a2a" $c="#0c0c0c">-186.97</AxisTag>
            <AxisValue $y={227}>-400.00</AxisValue>
            <AxisValue $y={265}>-600.00</AxisValue>
          </Axis>
        </Pane>
        <DateAxis>
          <DateCell $w={56} $first>8/11</DateCell>
          {dates.map((d) => (
            <DateCell key={d || "end"}>{d}</DateCell>
          ))}
        </DateAxis>
      </ChartArea>
      <ScrollBar>
        <ScrollLeft />
        <ScrollThumb>
          <ThumbBar />
          <ThumbBar />
          <ThumbBar />
        </ScrollThumb>
        <ScrollRight />
      </ScrollBar>
      <TabRow>
        <NavGroup>
          {navGlyphs.map((g) => (
            <NavBtn key={g}>
              <svg width="8" height="10" viewBox="0 0 8 10">
                {g === "first" && <path d="M1 1v8M7 1L3 5l4 4z" fill="#444" stroke="#444" />}
                {g === "prev" && <path d="M6 1L2 5l4 4z" fill="#444" />}
                {g === "next" && <path d="M2 1l4 4-4 4z" fill="#444" />}
                {g === "last" && <path d="M7 1v8M1 1l4 4-4 4z" fill="#444" stroke="#444" />}
              </svg>
            </NavBtn>
          ))}
        </NavGroup>
        {tabs.map(([label, w, active, flip]) => (
          <Tab key={label} $w={w} $active={active} $flip={flip}>
            {label}
          </Tab>
        ))}
      </TabRow>
      <StatusBar>
        <StatusHelp>For Help, press F1</StatusHelp>
        <StatusField $w={48}>Acct:</StatusField>
        <StatusField $w={92}>Open Psns:</StatusField>
        <StatusField $w={62}>DT BP:</StatusField>
        <StatusField $w={87}>Purch Pwr:</StatusField>
        <StatusField $w={93}>Closed P/L:</StatusField>
        <StatusField $w={60}>RT TE:</StatusField>
        <StatusField $w={84}>Open P/L:</StatusField>
        <StatusField $w={89} $c="#0a8a0a">ORDER BAR</StatusField>
        <StatusField $w={67} $c="#0a8a0a">MACROS</StatusField>
        <StatusField $w={21}><RedDot /></StatusField>
        <StatusField $w={122}>16/10/2023 14:41</StatusField>
      </StatusBar>
      <BottomStrip />
    </Screen>
  );
}
